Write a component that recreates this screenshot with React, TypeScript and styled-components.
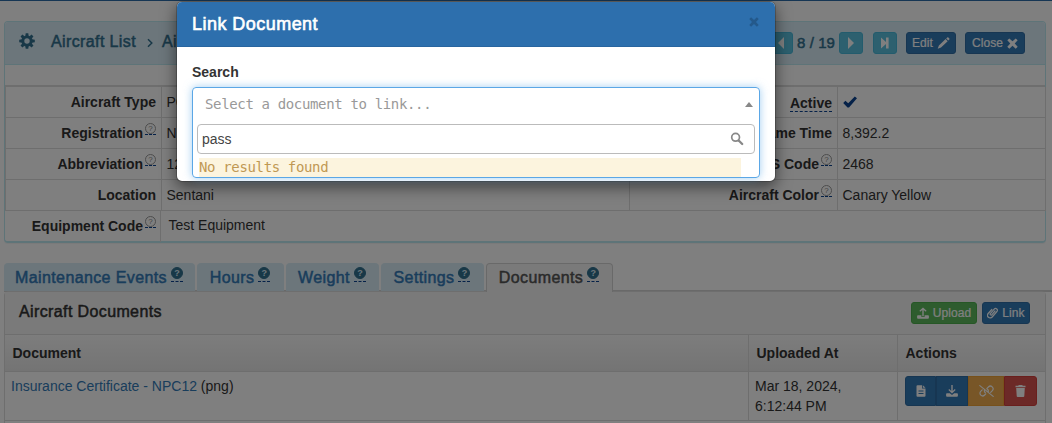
import React from "react"
import styled, { createGlobalStyle, css } from "styled-components"

const Cog = () => (
    <svg width="16" height="16" viewBox="0 0 16 16">
        <g fill="currentColor">
            {[0, 45, 90, 135].map((angle) => (
                <path key={angle} d="M6.7 .2h2.6l.4 3v9.600l-.4 3H6.700l-.4-3V3.200z" transform={`rotate(${angle} 8 8)`} />
            ))}
            <circle cx="8" cy="8" r="5.600" />
        </g>
        <circle cx="8" cy="8" r="2.700" fill="#d9edf7" />
    </svg>
)

const Pencil = () => (
    <svg width="13" height="12" viewBox="0 0 13 12" fill="currentColor">
        <path d="M10.200.5a.9.9 0 0 1 1.200 0l.9.9a.9.9 0 0 1 0 1.200l-1 1L9.200 1.500zM8.600 2.100 10.700 4.200 4 10.500l-3.300 1.300 1.200-3.300z" />
    </svg>
)

const Cross = ({ size = 11 }: { size?: number }) => (
    <svg width={size} height={size} viewBox="0 0 11 11" fill="currentColor">
        <path d="M2.300.4 5.500 3.300 8.700.4 10.700 2.300 7.700 5.500l3 3.200-2 2-3.200-3-3.200 3-2-2 3-3.200-3-3.200z" />
    </svg>
)

const Check = () => (
    <svg width="14" height="12" viewBox="0 0 14 12" fill="#0a4390">
        <path d="M11.800.4 14 2.300 6 11.600H4.500L.2 6.900 2.400 4.800 5.200 7.300z" />
    </svg>
)

const Lens = () => (
    <svg width="14" height="14" viewBox="0 0 14 14" fill="none" stroke="currentColor">
        <circle cx="5.600" cy="5.300" r="3.900" strokeWidth="1.700" />
        <path d="m8.700 8.500 3.500 3.500" strokeWidth="2.300" strokeLinecap="round" />
    </svg>
)

const UploadIcon = () => (
    <svg width="12" height="12" viewBox="0 0 12 12" fill="currentColor">
        <path d="M5.300 9.200V2.900L3.200 4.700l-.8-.9L6 .4l3.600 3.400-.8.9L6.700 2.900v6.300z" />
        <path d="M1 8.200h3.400v1.700h3.200V8.200H11a.9.9 0 0 1 .9.900v1.700a.9.9 0 0 1-.9.900H1a.9.9 0 0 1-.9-.9V9.100a.9.9 0 0 1 .9-.9z" />
    </svg>
)

const DownloadIcon = () => (
    <svg width="12" height="12" viewBox="0 0 12 12" fill="currentColor">
        <path d="M5.300 0h1.400v6l2.100-1.900.8.900L6 8.400 2.400 5l.8-.9L5.300 6z" />
        <path d="M1 8.200h2.800L6 10.100l2.200-1.900H11a.9.9 0 0 1 .9.900v1.700a.9.9 0 0 1-.9.900H1a.9.9 0 0 1-.9-.9V9.100a.9.9 0 0 1 .9-.9z" />
    </svg>
)

const Clip = () => (
    <svg width="11" height="12" viewBox="0 0 11 12" fill="none" stroke="currentColor" strokeWidth="1.200" strokeLinecap="round">
        <path d="M8 4 4.800 7.800a.9.9 0 0 1-1.400-1.200l3.800-4.500a1.800 1.800 0 0 1 2.700 2.400L5.200 10a2.600 2.600 0 0 1-4-3.500l3.600-4" />
    </svg>
)

const FileIcon = () => (
    <svg width="10" height="12" viewBox="0 0 10 12">
        <path d="M1.500.2H6v3.300h3.500v7.200a1 1 0 0 1-1 1h-7a1 1 0 0 1-1-1V1.200a1 1 0 0 1 1-1zM6.800.2l2.700 2.600H6.800z" fill="currentColor" />
        <path d="M2.500 6h5M2.500 8.500h5" stroke="#337ab7" strokeWidth="1" />
    </svg>
)

const Unlink = () => (
    <svg width="15" height="12" viewBox="0 0 15 12" fill="none" stroke="currentColor" strokeWidth="1.200" strokeLinecap="round">
        <path d="M.8.6 14.200 11.400M6.800 8.800 5.600 10a2.600 2.600 0 0 1-3.900-3.700l1.500-1.500M8.200 3.200 9.400 2a2.600 2.600 0 0 1 3.900 3.700l-1.600 1.600M5.700 4.600a2.600 2.600 0 0 0 .6 3.100M7.800 3.700a2.600 2.600 0 0 1 1.400 3.100" />
    </svg>
)

const Trash = () => (
    <svg width="11" height="12" viewBox="0 0 11 12" fill="currentColor">
        <path d="M3.800 0h3.400l.6.700h2.700v1.500H.5V.7h2.700zM1.200 3h8.600l-.5 8a1 1 0 0 1-1 1H2.700a1 1 0 0 1-1-1z" />
    </svg>
)

const Arrow = ({ end, back }: { end?: boolean; back?: boolean }) => (
    <svg width="10" height="12" viewBox="0 0 10 12" fill="currentColor">
        <path d={back ? "M8 0v12L2 6z" : end ? "M1 .4 6 5V.4h2.600v11.200H6V7l-5 4.600z" : "M2 0v12L8 6z"} />
    </svg>
)

const Help = ({ solid }: { solid?: boolean }) => (
    <Hint $solid={solid}>
        <HintMark $solid={solid}>?</HintMark>
    </Hint>
)

const leftRows = [
    { label: "Aircraft Type", value: "PC-12", help: false },
    { label: "Registration", value: "NPC12", help: true },
    { label: "Abbreviation", value: "12", help: true },
    { label: "Location", value: "Sentani", help: false },
]

const rightRows = [
    { label: "Active", value: "", help: false },
    { label: "Airframe Time", value: "8,392.2", help: false },
    { label: "GPS Code", value: "2468", help: true },
    { label: "Aircraft Color", value: "Canary Yellow", help: true },
]

const tabs = [
    { name: "Maintenance Events", width: 191 },
    { name: "Hours", width: 87 },
    { name: "Weight", width: 93 },
    { name: "Settings", width: 103 },
    { name: "Documents", width: 127 },
]

export default function App() {
    return (
        <Page>
            <GlobalStyle />
            <Navbar />
            <Panel>
                <PanelHeading>
                    <Cog />
                    <Crumb $gap={16}>Aircraft List</Crumb>
                    <Chevron width="6" height="10" viewBox="0 0 6 10">
                        <path d="M1 1.200 4.800 5 1 8.800" fill="none" stroke="currentColor" strokeWidth="1.500" />
                    </Chevron>
                    <Crumb $gap={9}>Aircraft</Crumb>
                    <Pager>
                        <Button $tone="info" $width={24}><Arrow back /></Button>
                        <Position>8 / 19</Position>
                        <Button $tone="info" $width={24}><Arrow /></Button>
                        <Button $tone="info" $width={24} $left={10}><Arrow end /></Button>
                        <Button $tone="primary" $width={50} $left={9}>Edit <Pencil /></Button>
                        <Button $tone="primary" $width={60} $left={9}>Close <Cross /></Button>
                    </Pager>
                </PanelHeading>
                <Facts>
                    {leftRows.map((row, i) => (
                        <React.Fragment key={row.label}>
                            <Label>{row.label}{row.help && <Help />}</Label>
                            <Value>{row.value}</Value>
                            <Label>
                                {i === 0 ? <Dashed>Active</Dashed> : rightRows[i].label}
                                {rightRows[i].help && <Help />}
                            </Label>
                            <Value>{i === 0 ? <Check /> : rightRows[i].value}</Value>
                        </React.Fragment>
                    ))}
                </Facts>
                <Equipment>
                    <Label>Equipment Code<Help /></Label>
                    <Value>Test Equipment</Value>
                </Equipment>
            </Panel>
            <Tabs>
                {tabs.map((tab) => (
                    <Tab key={tab.name} $width={tab.width} $active={tab.name === "Documents"}>
                        <span>{tab.name}</span><Help solid />
                    </Tab>
                ))}
            </Tabs>
            <Documents>
                <DocumentsHeading>
                    <span>Aircraft Documents</span>
                    <Button $tone="success" $width={66}><UploadIcon />Upload</Button>
                    <Button $tone="primary" $width={48} $left={5}><Clip />Link</Button>
                </DocumentsHeading>
                <HeadRow>
                    <Cell>Document</Cell>
                    <Cell>Uploaded At</Cell>
                    <Cell>Actions</Cell>
                </HeadRow>
                <BodyRow>
                    <Cell><span><a>Insurance Certificate - NPC12</a> (png)</span></Cell>
                    <Cell>Mar 18, 2024, 6:12:44 PM</Cell>
                    <Cell>
                        <Action $tone="primary" $width={31}><FileIcon /></Action>
                        <Action $tone="primary" $width={32}><DownloadIcon /></Action>
                        <Action $tone="warning" $width={36}><Unlink /></Action>
                        <Action $tone="danger" $width={33}><Trash /></Action>
                    </Cell>
                </BodyRow>
            </Documents>
            <Backdrop>
                <Modal>
                    <ModalHeader>
                        <ModalTitle>Link Document</ModalTitle>
                        <Dismiss><Cross size={10} /></Dismiss>
                    </ModalHeader>
                    <ModalBody>
                        <FieldLabel>Search</FieldLabel>
                        <Select>
                            <Selection>Select a document to link...<Caret /></Selection>
                            <SearchBox><span>pass</span><Lens /></SearchBox>
                            <NoResults>No results found</NoResults>
                        </Select>
                    </ModalBody>
                </Modal>
            </Backdrop>
        </Page>
    )
}

const GlobalStyle = createGlobalStyle`
    * {
        box-sizing: border-box;
    }

    body {
        margin: 0;
        overflow: hidden;
        background: white;
        color: #333;
        font: 14px/20px "Liberation Sans", Arial, sans-serif;
    }

    svg {
        flex: none;
        display: block;
    }
`

const tones = {
    info: "background: #5bc0de; border-color: #46b8da;",
    primary: "background: #337ab7; border-color: #2e6da4;",
    success: "background: #5cb85c; border-color: #4cae4c;",
    warning: "background: #f0ad4e; border-color: #eea236;",
    danger: "background: #d9534f; border-color: #d43f3a;",
}

const medium = css`
    font-size: 16px;
    letter-spacing: 0.38px;
    -webkit-text-stroke: 0.5px currentColor;
`

const Page = styled.div`
    position: relative;
    height: 423px;
    overflow: hidden;
    padding: 0 6px 0 4px;
`

const Navbar = styled.div`
    height: 1px;
    margin: 0 -6px 20px -4px;
    background: #2d6ca9;
`

const Panel = styled.div`
    height: 222px;
    border: 1px solid #bce8f1;
    border-bottom-width: 2px;
    border-radius: 4px;
    box-shadow: 0 1px 1px rgba(0, 0, 0, 0.05);
`

const PanelHeading = styled.div`
    display: flex;
    align-items: center;
    height: 43px;
    padding: 0 20px 0 15px;
    border-bottom: 1px solid #bce8f1;
    border-radius: 3px 3px 0 0;
    background: #d9edf7;
    color: #31708f;

    > svg:first-child {
        margin: -5px 0 0 -1px;
    }
`

const Crumb = styled.span<{ $gap: number }>`
    ${medium}
    margin-left: ${(p) => p.$gap}px;
    margin-top: -2px;
    white-space: nowrap;
`

const Chevron = styled.svg`
    margin-left: 11px;
`

const Pager = styled.div`
    display: flex;
    align-items: center;
    margin-left: auto;
`

const Position = styled.span`
    ${medium}
    width: 46px;
    text-align: center;
    font-size: 15px;
    letter-spacing: 0.1px;
`

const Button = styled.span<{ $tone: keyof typeof tones; $width: number; $left?: number }>`
    ${(p) => tones[p.$tone]}
    display: flex;
    flex: none;
    align-items: center;
    justify-content: center;
    gap: 4px;
    width: ${(p) => p.$width}px;
    height: 22px;
    margin-left: ${(p) => p.$left ?? 0}px;
    border-width: 1px;
    border-style: solid;
    border-radius: 3px;
    color: white;
    font-size: 12px;
    letter-spacing: 0.1px;
    -webkit-text-stroke: 0.2px white;
`

const Facts = styled.div`
    display: grid;
    grid-template-columns: 156px 468px 208px 208px;
    grid-auto-rows: 31px;
    margin-top: 20px;
    border-top: 2px solid #ddd;
    border-left: 1px solid #ddd;
`

const Equipment = styled.div`
    display: grid;
    grid-template-columns: 156px 1fr;
    height: 31px;
`

const Label = styled.div`
    display: flex;
    align-items: center;
    justify-content: flex-end;
    padding-right: 5px;
    border-right: 1px solid #ddd;
    border-bottom: 1px solid #ddd;
    font-weight: bold;
    white-space: nowrap;

    ${Equipment} & {
        padding-right: 4px;
        padding-bottom: 1px;
        border-bottom: 0;
    }
`

const Value = styled.div`
    display: flex;
    align-items: center;
    padding-left: 5px;
    border-right: 1px solid #ddd;
    border-bottom: 1px solid #ddd;
    text-indent: -0.5px;

    ${Equipment} & {
        padding: 0 0 3px 8px;
        border: 0;
    }
`

const Dashed = styled.span`
    height: 19px;
    padding-top: 1px;
    line-height: 18px;
    border-bottom: 1px dashed #0a4390;
`

const Hint = styled.span<{ $solid?: boolean }>`
    width: ${(p) => (p.$solid ? 12 : 11)}px;
    height: ${(p) => (p.$solid ? 15 : 12)}px;
    margin: ${(p) => (p.$solid ? "-7px 0 0 4px" : "-8px 0 0 2px")};
    border-bottom: 1px dashed #0a4390;
`

const HintMark = styled.span<{ $solid?: boolean }>`
    display: block;
    width: ${(p) => (p.$solid ? 12 : 11)}px;
    height: ${(p) => (p.$solid ? 12 : 11)}px;
    border: 1px solid ${(p) => (p.$solid ? "#31708f" : "#999")};
    border-radius: 50%;
    background: ${(p) => (p.$solid ? "#31708f" : "transparent")};
    color: ${(p) => (p.$solid ? "#d9edf7" : "#888")};
    font: ${(p) => (p.$solid ? "bold 9px/10px" : "8px/9px")} "Liberation Sans", sans-serif;
    letter-spacing: 0;
    text-align: center;
    -webkit-text-stroke: 0;
`

const Tabs = styled.div`
    display: flex;
    gap: 2px;
    height: 29px;
    margin: 20px -6px 0 0;
    border-bottom: 2px solid #d3d3d3;
`

const Tab = styled.div<{ $width: number; $active?: boolean }>`
    ${medium}
    display: flex;
    align-items: center;
    justify-content: center;
    width: ${(p) => p.$width}px;
    height: ${(p) => (p.$active ? 29 : 28)}px;
    padding-right: 1px;
    border: 1px solid ${(p) => (p.$active ? "#d3d3d3" : "#d9edf7")};
    border-bottom: 0;
    border-radius: 4px 4px 0 0;
    background: ${(p) => (p.$active ? "#f5f5f5" : "#d9edf7")};
    color: ${(p) => (p.$active ? "#555" : "#337ab7")};
    white-space: nowrap;
`

const Documents = styled.div`
    margin-top: -1px;
    height: 150px;
    border: 1px solid #ddd;
    border-radius: 4px;
`

const DocumentsHeading = styled.div`
    display: flex;
    align-items: center;
    height: 43px;
    padding: 0 15px 0 14px;
    border-bottom: 1px solid #ddd;
    background: #f5f5f5;

    > span:first-child {
        ${medium}
        margin-right: auto;
        margin-top: -2px;
    }
`

const Row = styled.div`
    display: grid;
    grid-template-columns: 744px 149px 1fr;
    border-bottom: 1px solid #ddd;
`

const Cell = styled.div`
    display: flex;
    border-right: 1px solid #ddd;

    &:last-child {
        border-right: 0;
    }
`

const HeadRow = styled(Row)`
    height: 37px;
    background: linear-gradient(#fafafa, #e8e8e8);
    font-weight: bold;

    ${Cell} {
        align-items: center;
        padding-left: 7.5px;
    }
`

const BodyRow = styled(Row)`
    height: 49px;

    ${Cell} {
        padding: 4px 6px;
    }

    ${Cell}:last-child {
        padding-left: 7px;
    }

    a {
        color: #337ab7;
    }
`

const Action = styled(Button)`
    height: 30px;
    border-radius: 0;

    &:first-child {
        border-radius: 3px 0 0 3px;
    }

    &:last-child {
        border-radius: 0 3px 3px 0;
    }
`

const Backdrop = styled.div`
    position: absolute;
    inset: 0;
    background: rgba(0, 0, 0, 0.5);
`

const Modal = styled.div`
    position: absolute;
    top: 1px;
    left: 176px;
    width: 600px;
    height: 181px;
    border: 1px solid rgba(0, 0, 0, 0.2);
    border-radius: 6px;
    background: white;
    background-clip: padding-box;
    box-shadow: 0 5px 15px rgba(0, 0, 0, 0.5);
`

const ModalHeader = styled.div`
    display: flex;
    justify-content: space-between;
    height: 45px;
    padding: 11px 16px 11px 15px;
    border-bottom: 1px solid #29659f;
    border-radius: 5px 5px 0 0;
    background: #2d6fad;
`

const ModalTitle = styled.div`
    color: white;
    font-size: 18px;
    line-height: 22px;
    letter-spacing: 0.46px;
    -webkit-text-stroke: 0.6px white;
`

const Dismiss = styled.span`
    margin-top: 4px;
    color: #24598b;
`

const ModalBody = styled.div`
    padding: 15px;
`

const FieldLabel = styled.div`
    margin-bottom: 5px;
    font-weight: bold;
`

const Select = styled.div`
    height: 91px;
    border: 1px solid #5ba7e6;
    border-radius: 4px;
    box-shadow: 0 0 8px rgba(102, 175, 233, 0.6);
    font-family: "DejaVu Sans Mono", monospace;
    font-size: 14px;
    letter-spacing: -0.35px;
`

const Selection = styled.div`
    display: flex;
    align-items: center;
    justify-content: space-between;
    height: 32px;
    padding: 0 6px 0 12px;
    color: #999;
`

const Caret = styled.span`
    border: 4px solid transparent;
    border-top: 0;
    border-bottom: 5px solid #888;
`

const SearchBox = styled.div`
    display: flex;
    align-items: center;
    justify-content: space-between;
    height: 30px;
    margin: 4px;
    padding: 0 10px 0 4px;
    border: 1px solid #bbb;
    border-radius: 4px;
    color: #444;
    font: 14px/20px "Liberation Sans", sans-serif;
    letter-spacing: 0;

    svg {
        color: #888;
    }
`

const NoResults = styled.div`
    width: 542px;
    height: 19px;
    margin-left: 6px;
    background: #fcf4de;
    color: #c09853;
    line-height: 19px;
`
